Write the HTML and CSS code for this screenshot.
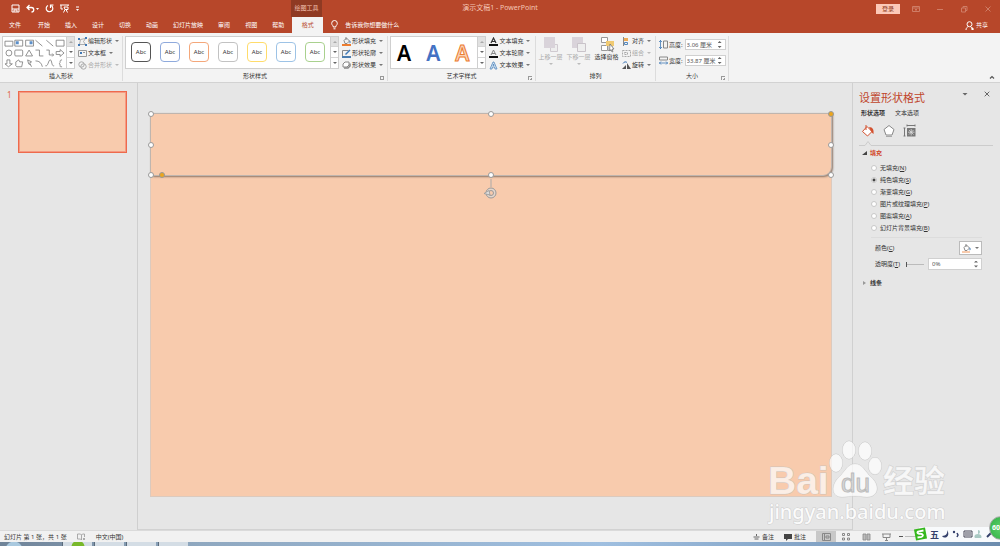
FILE: index.html
```html
<!DOCTYPE html>
<html lang="zh-CN">
<head>
  <meta charset="UTF-8">
  <title>演示文稿1 - PowerPoint</title>
  <link rel="stylesheet" href="styles.css">
</head>
<body>
<div class="app">

  <header class="titlebar">
    <div class="title-left">
      <div class="quick">
        <button aria-label="保存"><svg width="9" height="9" viewBox="0 0 9 9"><path d="M1 1h7v7H1zM1 5h7M3 8V6h3v2"/></svg></button>
        <button aria-label="撤消"><svg width="13" height="9" viewBox="0 0 13 9"><path d="M3.500 1L1 3.500 3.500 6M1 3.500h4.500a2 2 0 0 1 0 4.500" stroke-width="1.300"/><path d="M10 4h3l-1.500 2z" class="solid"/></svg></button>
        <button aria-label="重复"><svg width="9" height="9" viewBox="0 0 9 9"><path d="M3 1.500a3.300 3.300 0 1 0 3.500.3M8.500 1H5.500v3" stroke-width="1.200"/></svg></button>
        <button aria-label="放映"><svg width="9" height="9" viewBox="0 0 9 9"><path d="M0 1h9M1 1v4h2M8 1v1M4 3h4v2.500H5zM5 5.500L3.500 8.500M6 5.500l1.500 3"/></svg></button>
        <button aria-label="自定义"><svg width="5" height="7" viewBox="0 0 5 7"><path d="M1 2h3"/><path d="M1 4h3L2.500 6z" class="solid"/></svg></button>
      </div>
      <div class="context-title">绘图工具</div>
    </div>
    <div class="doc-title">演示文稿1 - PowerPoint</div>
    <div class="title-right">
      <button class="login">登录</button>
      <button aria-label="功能区选项"><svg width="8" height="8" viewBox="0 0 8 8"><path d="M.5 1.500h7v5h-7zM.5 3h7M4 6V4M3 5l1-1 1 1"/></svg></button>
      <button aria-label="最小化"><svg width="8" height="8" viewBox="0 0 8 8"><path d="M1 4.500h6"/></svg></button>
      <button aria-label="还原"><svg width="8" height="8" viewBox="0 0 8 8"><path d="M1.500 3h4v4h-4zM3 3V1.500h4V5.500H5.500"/></svg></button>
      <button aria-label="关闭"><svg width="8" height="8" viewBox="0 0 8 8"><path d="M1.500 1.500l5 5M6.500 1.500l-5 5"/></svg></button>
    </div>
  </header>

  <nav class="tabs">
    <a href="#">文件</a>
    <a href="#">开始</a>
    <a href="#">插入</a>
    <a href="#">设计</a>
    <a href="#">切换</a>
    <a href="#">动画</a>
    <a href="#">幻灯片放映</a>
    <a href="#">审阅</a>
    <a href="#">视图</a>
    <a href="#">帮助</a>
    <a href="#" class="active">格式</a>
    <a href="#" class="tell"><svg width="7" height="10" viewBox="0 0 7 10"><path d="M2.200 7V6C1.500 5.300.7 4.600.7 3.300a2.800 2.800 0 0 1 5.600 0C6.300 4.600 5.500 5.300 4.800 6v1zM2.500 8.800h2"/></svg>告诉我你想要做什么</a>
    <a href="#" class="share"><svg width="9" height="9" viewBox="0 0 9 9"><circle cx="4.500" cy="3.200" r="2.500"/><path d="M1 9c0-2 1.200-3 2.500-3.500M5.500 5.500L8 8.500M6 8h3M7.500 6.500V9"/></svg>共享</a>
  </nav>

  <section class="ribbon">
    <div class="group insert">
      <div class="group-body">
        <div class="gallery">
          <svg class="shapes" width="63" height="32" viewBox="0 0 64 32">
            <path d="M2 4h8v5H2zM12 3h8v6h-8zM23 3h8v6h-8zM33 3l7 6M44 3l7 6M54 3h8v6h-8z"/>
            <circle cx="6" cy="16" r="3"/>
            <rect x="12" y="13" width="8" height="6" rx="1"/>
            <path d="M26.500 13l3.500 6h-7zM33 13h4v6h4M44 13h3v5h4M50 16.500l1.500 1.500-1.500 1.500M54 14.500h4v-2l4 3.500-4 3.500v-2h-4z"/>
            <path d="M4 23h3v4h2.500L5.500 30 2 27h2zM13 29v-4l3-2 1 2h3l-1 5h-5zM25 23l4 2-2 1 2 4M25 23l1 4 2 1M33 24c4 0 6 2 7 6M43 29c3 1 3-6 5-6s1 7 4 6M60 23c-2 0-2 1-2 2s0 1-1 2c1 0 1 1 1 2s0 1 2 1"/>
            <path d="M13 4h3v3h-3zM27 4h3v3h-3z" fill="#5b8fc9" stroke="none"/>
          </svg>
          <div class="scroller"><button class="up" aria-label="上"></button><button aria-label="下"></button><button class="more" aria-label="更多"></button></div>
        </div>
        <div class="commands">
          <button><svg width="9" height="9" viewBox="0 0 9 9"><path d="M1.500 7.500l1-5 5-1-2 3 2 3z" stroke="#999" stroke-width=".8"/><path d="M0 1h2v2H0zM7 0h2v2H7zM7 7h2v2H7zM0 7h2v2H0z" fill="#3f78b5"/></svg>编辑形状<i></i></button>
          <button><svg width="9" height="9" viewBox="0 0 9 9"><path d="M.5 1.500h8v6h-8zM5 3.500h2" stroke="#999"/><path d="M2 3h2v2H2z" fill="#3f78b5"/></svg>文本框<i></i></button>
          <button disabled><svg width="9" height="9" viewBox="0 0 9 9"><circle cx="3.500" cy="3.500" r="2.700" stroke="#aaa"/><circle cx="5.500" cy="5.500" r="2.700" stroke="#aaa"/></svg>合并形状<i></i></button>
        </div>
      </div>
      <div class="group-label">插入形状</div>
    </div>

    <div class="group styles">
      <div class="group-body">
        <div class="gallery">
          <div class="tiles">
            <button class="tile black">Abc</button>
            <button class="tile blue">Abc</button>
            <button class="tile orange">Abc</button>
            <button class="tile gray">Abc</button>
            <button class="tile yellow">Abc</button>
            <button class="tile sky">Abc</button>
            <button class="tile green">Abc</button>
          </div>
          <div class="scroller"><button class="up" aria-label="上"></button><button aria-label="下"></button><button class="more" aria-label="更多"></button></div>
        </div>
        <div class="commands">
          <button><svg width="9" height="9" viewBox="0 0 9 9"><path d="M2 3.500L4.500 1 7.500 4 5 6.500H3zM4 0v3" stroke="#888"/><path d="M7.500 3.500c2 1 1 3 0 3z" fill="#3f78b5"/><path d="M0 7h9v2H0z" fill="#ed7d31"/></svg>形状填充<i></i></button>
          <button><svg width="9" height="9" viewBox="0 0 9 9"><path d="M.5 7V1.500h6" stroke="#888"/><path d="M8 1L3.500 5.500" stroke="#3f78b5" stroke-width="1.500"/><path d="M0 7h9v2H0z" fill="#4b7cae"/></svg>形状轮廓<i></i></button>
          <button><svg width="9" height="9" viewBox="0 0 9 9"><path d="M2 7h4l2-2V2.500" stroke="#888" stroke-width="1.500"/><path d="M1 3l2-2h4v3L5 6H1z" fill="#fff" stroke="#888"/></svg>形状效果<i></i></button>
        </div>
      </div>
      <div class="group-label">形状样式<span class="launcher"></span></div>
    </div>

    <div class="group wordart">
      <div class="group-body">
        <div class="gallery">
          <div class="letters">
            <button class="fill-black">A</button>
            <button class="fill-blue">A</button>
            <button class="fill-orange">A</button>
          </div>
          <div class="scroller"><button class="up" aria-label="上"></button><button aria-label="下"></button><button class="more" aria-label="更多"></button></div>
        </div>
        <div class="commands">
          <button><svg width="9" height="9" viewBox="0 0 9 9"><path d="M2 6l2.500-5L7 6M3 4.500h3" stroke="#333" stroke-width="1.200"/><path d="M0 7h9v2H0z" fill="#111"/></svg>文本填充<i></i></button>
          <button><svg width="9" height="9" viewBox="0 0 9 9"><path d="M2 6l2.500-5L7 6M3 4.500h3" stroke="#888"/><path d="M0 7h9v2H0z" fill="#111"/></svg>文本轮廓<i></i></button>
          <button><svg width="9" height="9" viewBox="0 0 9 9"><path d="M1 8l3-7h1l3 7H6L5.500 6h-2L3 8zM4 4.500h1L4.500 3z" fill="#d5e5f5" stroke="#5689bd" stroke-width=".8"/></svg>文本效果<i></i></button>
        </div>
      </div>
      <div class="group-label">艺术字样式<span class="launcher"></span></div>
    </div>

    <div class="group arrange">
      <div class="group-body">
        <button class="big" disabled><svg width="16" height="17" viewBox="0 0 16 17"><path d="M7.500 8.500h7v7h-7z" fill="#eee" stroke="#d0cad0"/><path d="M1 1h11v11H1z" fill="#d9d3da"/></svg>上移一层<i></i></button>
        <button class="big" disabled><svg width="16" height="17" viewBox="0 0 16 17"><path d="M1 1h11v11H1z" fill="#d9d3da"/><path d="M6.500 7.500h8v8h-8z" fill="#eee" stroke="#c9c3c9"/></svg>下移一层<i></i></button>
        <button class="big"><svg width="16" height="17" viewBox="0 0 16 17"><path d="M2.500 1.500h6v5h-6zM2.500 9.500h6v5h-6zM9 9.500h4v5H9z" fill="#fff" stroke="#999"/><path d="M7 5h8v5H7z" fill="#f0ca72"/><path d="M11 8l4 5-2 .2 1 2.300-1 .5-1-2.300-1.500 1z" fill="#fff" stroke="#666" stroke-width=".7"/></svg>选择窗格</button>
        <div class="commands">
          <button><svg width="9" height="9" viewBox="0 0 9 9"><path d="M1.500 0v9" stroke="#888"/><path d="M2 1h4v3H2z" fill="#edaa55"/><path d="M2.500 5.500h3v2h-3z" stroke="#5689bd"/></svg>对齐<i></i></button>
          <button disabled><svg width="9" height="9" viewBox="0 0 9 9"><path d="M.5 1.500h8v6h-8zM2.500 3.500h3v2h-3z" stroke="#aaa" stroke-dasharray="2 1"/></svg>组合<i></i></button>
          <button><svg width="9" height="9" viewBox="0 0 9 9"><path d="M0 8h4V4zM5 8h4L5 2z" fill="#555"/><path d="M1 2.500c1-2 3-2 4-1" stroke="#3f78b5"/></svg>旋转<i></i></button>
        </div>
      </div>
      <div class="group-label">排列</div>
    </div>

    <div class="group size">
      <div class="group-body">
        <div class="measures">
          <label for="shape-height"><svg width="9" height="9" viewBox="0 0 9 9"><path d="M4.500 1h4v7h-4z" stroke="#888"/><path d="M1.500 0v9M0 2l1.500-1.500L3 2M0 7l1.500 1.500L3 7" stroke="#3f78b5" stroke-width=".8"/></svg>高度:</label>
          <span class="spin"><input id="shape-height" type="text" value="3.06 厘米"><b></b></span>
          <label for="shape-width"><svg width="9" height="9" viewBox="0 0 9 9"><path d="M.5 1h8v3h-8z" stroke="#888"/><path d="M0 7h9M2 5.500L.5 7 2 8.500M7 5.500L8.500 7 7 8.500" stroke="#3f78b5" stroke-width=".8"/></svg>宽度:</label>
          <span class="spin"><input id="shape-width" type="text" value="33.87 厘米"><b></b></span>
        </div>
      </div>
      <div class="group-label">大小<span class="launcher"></span></div>
    </div>
    <button class="collapse" aria-label="折叠功能区"><svg width="6" height="4" viewBox="0 0 6 4"><path d="M1 3.500l2-2 2 2" stroke="#555" stroke-width="1.200"/></svg></button>
  </section>

  <main class="workspace">
    <aside class="thumbs">
      <span>1</span>
      <div class="thumb"></div>
    </aside>

    <div class="canvas">
      <div class="slide">
        <div class="shape">
          <span class="handle nw"></span>
          <span class="handle n"></span>
          <span class="handle ne adjust"></span>
          <span class="handle w"></span>
          <span class="handle e"></span>
          <span class="handle sw"></span>
          <span class="handle s"></span>
          <span class="handle se"></span>
          <span class="handle corner adjust"></span>
          <svg class="rotate" width="14" height="22" viewBox="0 0 14 22"><path d="M7 2v8" stroke="#aaa"/><circle cx="7" cy="16" r="5" fill="#e4d6cc" stroke="#999"/><circle cx="7" cy="16" r="2.500" fill="#f8cbad" stroke="#999"/><path d="M0 16.500l5-3 1 4.500z" fill="#ddd" stroke="#999" stroke-width=".8"/></svg>
        </div>
      </div>
    </div>

    <aside class="pane">
      <div class="pane-head">
        <h2>设置形状格式</h2>
        <button aria-label="选项"><svg width="6" height="6" viewBox="0 0 6 6"><path d="M.5 2h5L3 4.500z" fill="#666"/></svg></button>
        <button aria-label="关闭窗格"><svg width="6" height="6" viewBox="0 0 6 6"><path d="M.7.7l4.600 4.600M5.300.7L.7 5.300" stroke="#666"/></svg></button>
      </div>
      <div class="pane-tabs"><a href="#" class="on">形状选项</a><a href="#">文本选项</a></div>
      <div class="pane-icons">
        <button aria-label="填充与线条"><svg width="14" height="14" viewBox="0 0 14 14"><path d="M1.500 7.500L6 2.500l5 5L6.500 12z" fill="#fff" stroke="#d35230"/><path d="M5 1v5" stroke="#d35230"/><path d="M8 3c4 0 5 3 4.500 7-2-1-2.500-3-4.500-7z" fill="#d35230"/></svg></button>
        <button aria-label="效果"><svg width="14" height="14" viewBox="0 0 14 14"><path d="M7 1.500l5 4-2 5.500H4L2 5.500z" fill="#fff" stroke="#888"/><path d="M4 12.500h6" stroke="#aaa"/></svg></button>
        <button aria-label="大小与属性"><svg width="14" height="14" viewBox="0 0 14 14"><path d="M4 1.500h8M4 .5v2M12 .5v2M1.500 4v8M.5 4h2M.5 12h2" stroke="#777"/><path d="M4 4h8.500v8.500H4z" fill="#777"/><path d="M8.200 5v6.500M5 8.200h6.500M6 6l4.500 4.500M10.500 6L6 10.500" stroke="#ddd" stroke-width=".8"/></svg></button>
      </div>
      <svg class="notch" width="134" height="5" viewBox="0 0 134 5"><path d="M0 4.500h6l3-4 3 4h122" stroke="#ccc"/></svg>
      <h3 class="open">填充</h3>
      <div class="radios">
        <label><input type="radio" name="fill">无填充(<u>N</u>)</label>
        <label><input type="radio" name="fill" checked>纯色填充(<u>S</u>)</label>
        <label><input type="radio" name="fill">渐变填充(<u>G</u>)</label>
        <label><input type="radio" name="fill">图片或纹理填充(<u>P</u>)</label>
        <label><input type="radio" name="fill">图案填充(<u>A</u>)</label>
        <label><input type="radio" name="fill">幻灯片背景填充(<u>B</u>)</label>
      </div>
      <div class="field">
        <label for="fill-color">颜色(<u>C</u>)</label>
        <button id="fill-color" class="color"><svg width="9" height="9" viewBox="0 0 9 9"><path d="M2 3.500L4.500 1 7.500 4 5 6.500H3zM4 0v3" stroke="#888"/><path d="M7.500 3.500c2 1 1 3 0 3z" fill="#3f78b5"/><path d="M0 7h8v2H0z" fill="#f8cbad"/></svg><i></i></button>
      </div>
      <div class="field">
        <label for="alpha">透明度(<u>T</u>)</label>
        <input class="slider" type="range" value="0" aria-label="透明度">
        <span class="spin"><input id="alpha" type="text" value="0%"><b></b></span>
      </div>
      <h3 class="closed">线条</h3>
    </aside>
  </main>

  <footer class="status">
    <span>幻灯片 第 1 张，共 1 张</span>
    <svg width="9" height="8" viewBox="0 0 9 8"><path d="M.5 1h3l1 1v5l-1-1h-3zM4.500 2l1-1h2v3M6 5l2 2M8 5L6 7" stroke="#999" stroke-width=".8"/></svg>
    <span>中文(中国)</span>
    <div class="status-right">
      <button><svg width="7" height="8" viewBox="0 0 7 8"><path d="M.5 4h6M1.500 6h4M3.500 1v2" stroke="#666"/></svg>备注</button>
      <button><svg width="8" height="8" viewBox="0 0 8 8"><path d="M0 1h8v5H4L2 8V6H0z" fill="#444"/></svg>批注</button>
      <div class="views">
        <button class="on" aria-label="普通视图"><svg width="9" height="8" viewBox="0 0 9 8"><path d="M.5.5h8v7h-8zM2.500 1v6M4 3h3v2H4z" stroke="#888"/></svg></button>
        <button aria-label="幻灯片浏览"><svg width="9" height="8" viewBox="0 0 9 8"><path d="M.5.500h2v2h-2zM5.500.5h2v2h-2zM.5 5h2v2h-2zM5.500 5h2v2h-2z" stroke="#888"/></svg></button>
        <button aria-label="阅读视图"><svg width="9" height="8" viewBox="0 0 9 8"><path d="M1 1h3v6H1zM5 1h3v6H5z" fill="#bbb" stroke="#888" stroke-width=".8"/></svg></button>
        <button aria-label="幻灯片放映"><svg width="9" height="8" viewBox="0 0 9 8"><path d="M0 1h9M1 1v3.500h7V1M4.500 5v2.500M3 7.500h3" stroke="#888"/></svg></button>
      </div>
      <span class="zoom-out"></span>
    </div>
  </footer>
  <div class="taskbar"><span class="start"></span><span></span><span></span><span></span><span></span></div>

  <div class="ime">
    <svg width="86" height="14" viewBox="0 0 86 14">
      <path d="M1 2.500L12 .5l2 11L3 13.500z" fill="#35b81d"/>
      <path d="M10.500 3.500L5 4.500c-1.500 1 0 2.500 2 2.300 3-.3 4 2 1.500 3L4.500 10.500" stroke="#fff" stroke-width="1.800"/>
      <text x="17" y="11" class="ime-mode">五</text>
      <path d="M34 3c1 3-1 6-5 6 3 4 9 0 5-6z" fill="#34406b"/>
      <circle cx="41" cy="5" r="1.200" fill="#34406b"/><path d="M44 6l1 2-1 2" stroke="#34406b" stroke-width="1.500"/>
      <path d="M51 4h8v6h-8zM52 6h6M52 8h6" stroke="#445"/>
      <path d="M65 3a2 2 0 1 1 0 4c4 0 4 4 3 4h-6c-1-1-1-4 3-4" fill="#a9c9c3"/>
      <path d="M74 10l5-5" stroke="#34406b" stroke-width="2"/>
    </svg>
  </div>
  <div class="ball">60</div>

  <svg class="watermark" width="184" height="88" viewBox="0 0 184 88">
    <g class="mark">
      <text x="1" y="55" class="brand">Bai</text>
      <ellipse cx="69" cy="24" rx="6.500" ry="9"/>
      <ellipse cx="82" cy="11" rx="6.500" ry="9"/>
      <ellipse cx="98" cy="12" rx="6.500" ry="9"/>
      <ellipse cx="108" cy="27" rx="6.500" ry="8.500"/>
      <path d="M88 25c8 0 10 8 16 13 9 8 8 20-4 20-5 0-7-1-12-1s-8 1-13 1c-11 0-11-12-3-20 6-5 8-13 16-13z"/>
      <text x="116" y="53" class="word">经验</text>
      <text x="2" y="80" class="site">jingyan.baidu.com</text>
    </g>
    <text x="74" y="53" class="du">du</text>
  </svg>
</div>
</body>
</html>
```
FILE: styles.css
```css
* {
  box-sizing: border-box;
}
body {
  margin: 0;
  font-family: "Noto Sans", "Noto Sans CJK SC", sans-serif;
  font-size: 6px;
  line-height: 8px;
  color: #333;
  background: #e6e6e6;
}
button, input {
  font: inherit;
  color: inherit;
  margin: 0;
  padding: 0;
  border: 0;
  background: none;
}
a {
  color: inherit;
  text-decoration: none;
}
svg {
  fill: none;
  flex: none;
}
i {
  border: 2px solid transparent;
  border-top-color: #777;
  border-bottom: 0;
}
.app {
  position: relative;
  height: 100vh;
  display: flex;
  flex-direction: column;
  overflow: hidden;
}

/* title bar */
.titlebar {
  display: grid;
  grid-template-columns: 1fr auto 1fr;
  height: 17px;
  background: #b7472a;
  color: #f5c5b5;
}
.titlebar svg {
  display: block;
  stroke: #fff;
}
.titlebar .solid {
  fill: #fff;
  stroke: none;
}
.title-left {
  display: flex;
}
.quick {
  display: flex;
  align-items: center;
  gap: 6px;
  width: 291px;
  padding-left: 11px;
}
.context-title {
  width: 31px;
  background: #8f3a23;
  line-height: 16px;
  text-align: center;
}
.doc-title {
  font-size: 7px;
  line-height: 16px;
}
.title-right {
  display: flex;
  justify-content: flex-end;
  align-items: center;
  gap: 16px;
  padding-right: 8px;
}
.title-right svg {
  stroke: #cf7d66;
}
.login {
  width: 24px;
  height: 10px;
  margin-right: -4px;
  background: #fcc9b8;
  color: #8f3a23;
}

/* tabs */
.tabs {
  display: flex;
  height: 16px;
  padding-left: 2px;
  gap: 1px;
  background: #b7472a;
  color: #fff;
  line-height: 16px;
}
.tabs a {
  padding: 0 7px;
}
.tabs a:first-child {
  padding-right: 9px;
}
.tabs svg {
  stroke: #fff;
}
.tabs .active {
  width: 31px;
  padding: 0;
  text-align: center;
  background: #f3f3f3;
  color: #b7472a;
}
.tabs .tell, .tabs .share {
  display: flex;
  align-items: center;
  gap: 7px;
}
.tabs .share {
  gap: 2px;
  margin-left: auto;
  padding-right: 12px;
}

/* ribbon */
.ribbon {
  display: flex;
  height: 50px;
  padding: 3px 0 1px;
  background: #f3f3f3;
  border-bottom: 1px solid #d2d2d2;
}
.group {
  display: flex;
  flex-direction: column;
  justify-content: space-between;
  border-right: 1px solid #dcdcdc;
  padding: 0 2px;
}
.insert { width: 123px; }
.styles { width: 265px; }
.wordart { width: 148px; }
.arrange { width: 120px; }
.size { width: 73px; }
.group-body {
  display: flex;
  gap: 3px;
}
.group-label {
  position: relative;
  text-align: center;
  line-height: 9px;
}
.launcher {
  position: absolute;
  right: 1px;
  bottom: 1px;
  width: 4px;
  height: 4px;
  border: 1px solid #999;
  border-width: 1px 0 0 1px;
  background: linear-gradient(135deg, transparent 50%, #999 50%);
}
.gallery {
  display: flex;
  height: 33px;
  background: #fff;
  border: 1px solid #cfcfcf;
}
.shapes {
  stroke: #777;
  stroke-width: 0.8;
}
.scroller {
  width: 8px;
  display: grid;
  grid-template-rows: 1fr 1fr 1fr;
  margin-left: auto;
  border-left: 1px solid #cfcfcf;
}
.scroller button {
  display: grid;
  place-items: center;
  border-bottom: 1px solid #d5d5d5;
}
.scroller button::before {
  content: "";
  border: 2px solid transparent;
  border-top-color: #666;
  border-bottom: 0;
}
.scroller .up {
  background: #e1e1e1;
}
.scroller .up::before {
  border: 2px solid transparent;
  border-bottom-color: #aaa;
  border-top: 0;
}
.scroller .more {
  border: 0;
}
.scroller .more::before {
  box-shadow: 0 -2px 0 -1px #666;
}
.commands {
  display: flex;
  flex-direction: column;
  gap: 2px;
}
.commands button {
  display: flex;
  align-items: center;
  gap: 1px;
  height: 10px;
}
.commands i {
  margin-left: 2px;
}
button:disabled {
  color: #aaa;
}
button:disabled i {
  border-top-color: #bbb;
}
.tiles {
  display: flex;
  gap: 9px;
  padding: 5px 5px 0;
}
.tile {
  width: 20px;
  height: 20px;
  border: 1px solid #555;
  border-radius: 4px;
  background: #fff;
}
.blue { border-color: #8faadc; }
.orange { border-color: #f4a77a; }
.gray { border-color: #c2c2c2; }
.yellow { border-color: #ffdc6b; }
.sky { border-color: #9dc3e6; }
.green { border-color: #a9d18e; }
.letters {
  display: flex;
  gap: 15px;
  padding: 0 8px 0 6px;
}
.letters button {
  font: 600 21px/33px "Noto Sans", sans-serif;
}
.fill-black { color: #000; }
.fill-blue { color: #4472c4; }
.fill-orange {
  color: #f9d3b8;
  -webkit-text-stroke: 1px #ed7d31;
}
.big {
  display: flex;
  flex-direction: column;
  align-items: center;
  width: 25px;
  white-space: nowrap;
}
.big i {
  margin-top: 2px;
}
.measures {
  display: grid;
  grid-template-columns: auto 41px;
  align-items: center;
  gap: 5px 2px;
  padding: 3px 0 0 1px;
}
.measures label {
  display: flex;
  align-items: center;
  gap: 1px;
}
.spin {
  display: flex;
  align-items: center;
  justify-content: space-between;
  height: 11px;
  padding: 0 3px 0 1px;
  background: #fff;
  border: 1px solid #d0d0d0;
  color: #555;
}
.spin input {
  width: 100%;
  min-width: 0;
}
.spin b {
  flex: none;
  width: 4px;
  height: 7px;
  background: #666;
  clip-path: polygon(50% 0, 100% 30%, 0 30%, 50% 0, 50% 100%, 0 70%, 100% 70%, 50% 100%);
}
.collapse {
  margin-left: auto;
  align-self: flex-end;
  padding-right: 5px;
}

/* workspace */
.workspace {
  flex: 1;
  min-height: 0;
  display: grid;
  grid-template-columns: 138px 1fr 148px;
}
.thumbs {
  display: flex;
  align-items: flex-start;
  gap: 6px;
  padding: 8px 10px 0 7px;
  border-right: 1px solid #cfcfcf;
  font-size: 8px;
  color: #e0654a;
}
.thumb {
  flex: 1;
  aspect-ratio: 16 / 9;
  background: #f8cbad;
  border: 1px solid #ee6a4c;
  outline: 1px solid #f49b84;
  outline-offset: -2px;
}
.canvas {
  padding: 30px 20px 0 12px;
  border-bottom: 1px solid #d2d2d2;
}
.slide {
  aspect-ratio: 16 / 9;
  background: #f8cbad;
  border: 1px solid #dccabe;
  border-top: 0;
}
.shape {
  position: relative;
  height: 16.5%;
  margin: 0 -1px;
  background: #f8cbad;
  border: 1px solid #bfb5ae;
  border-radius: 0 0 9px 4px;
  box-shadow: 1px 1px 2px #8d7668;
}
.handle {
  position: absolute;
  width: 6px;
  height: 6px;
  margin: -3px;
  border: 1px solid #999;
  border-radius: 50%;
  background: #fff;
}
.nw { left: 0; top: 0; }
.n { left: 50%; top: 0; }
.ne { left: 100%; top: 0; }
.w { left: 0; top: 50%; }
.e { left: 100%; top: 50%; }
.sw { left: 0; top: 100%; }
.s { left: 50%; top: 100%; }
.se { left: 100%; top: 100%; }
.corner { left: 11px; top: 100%; }
.adjust {
  background: #eca51c;
}
.rotate {
  position: absolute;
  left: 50%;
  top: 100%;
  margin: 2px -7px;
}

/* format pane */
.pane {
  padding: 8px 8px 0 6px;
  border-left: 1px solid #d0d0d0;
}
.pane-head {
  display: flex;
  align-items: flex-start;
  gap: 16px;
  padding-right: 2px;
}
.pane-head h2 {
  flex: 1;
  margin: 0;
  font-size: 11px;
  line-height: 13px;
  font-weight: normal;
  color: #c0452b;
  white-space: nowrap;
}
.pane-tabs {
  display: flex;
  gap: 10px;
  padding: 5px 0 0 2px;
}
.pane-tabs .on {
  font-weight: bold;
}
.pane-icons {
  display: flex;
  gap: 7px;
  padding: 7px 0 0 2px;
}
.pane-icons svg {
  display: block;
}
.notch {
  display: block;
  margin-top: 3px;
}
.pane h3 {
  display: flex;
  align-items: center;
  gap: 3px;
  margin: 3px 0 0 3px;
  font-size: 6px;
  font-weight: bold;
}
.pane h3::before {
  content: "";
  width: 5px;
  height: 4px;
  background: #444;
  clip-path: polygon(100% 0, 100% 100%, 0 100%);
}
.pane .open {
  color: #d2472a;
}
.pane .closed {
  margin-top: 9px;
}
.pane .closed::before {
  background: #999;
  clip-path: polygon(20% 0, 80% 50%, 20% 100%);
}
.radios {
  display: flex;
  flex-direction: column;
  gap: 4px;
  margin: 7px 10px 0 12px;
  padding-bottom: 5px;
  border-bottom: 1px solid #dcdcdc;
}
.radios label {
  display: flex;
  align-items: center;
}
.radios input {
  appearance: none;
  width: 6px;
  height: 6px;
  margin-right: 3px;
  border: 1px solid #c8c8c8;
  border-radius: 50%;
  background: #fff;
}
.radios input:checked {
  background: radial-gradient(#444 1px, #fff 2px);
}
.field {
  display: flex;
  align-items: center;
  gap: 4px;
  margin: 3px 10px 0 16px;
}
.field label {
  flex: 1;
  white-space: nowrap;
}
.color {
  display: flex;
  align-items: center;
  justify-content: center;
  gap: 4px;
  width: 23px;
  height: 14px;
  background: #fff;
  border: 1px solid #bbb;
}
.slider {
  appearance: none;
  width: 18px;
  height: 6px;
  background: linear-gradient(#bbb, #bbb) center / 100% 1px no-repeat;
}
.slider::-webkit-slider-thumb {
  appearance: none;
  width: 1px;
  height: 5px;
  background: #555;
}
.field .spin {
  width: 54px;
  height: 12px;
  padding-left: 3px;
}

/* status bar */
.status {
  display: flex;
  align-items: center;
  gap: 10px;
  height: 12px;
  padding-left: 4px;
  background: #f1f1f1;
  border-top: 1px solid #dadada;
}
.status-right {
  display: flex;
  align-items: center;
  gap: 10px;
  height: 100%;
  margin-left: auto;
  padding-right: 83px;
}
.status-right button {
  display: flex;
  align-items: center;
  gap: 2px;
}
.views {
  display: flex;
  height: 100%;
}
.views button {
  justify-content: center;
  width: 20px;
}
.views .on {
  background: #c8c8c8;
}
.zoom-out {
  width: 18px;
  height: 1px;
  margin-left: -7px;
  background: linear-gradient(90deg, #555 4px, transparent 4px 6px, #bbb 6px);
}
.taskbar {
  display: flex;
  gap: 2px;
  height: 4px;
  background: linear-gradient(90deg, #6f8398, #8fa8c0 20%, #9fbfe0 60%, #6c8cae);
}
.taskbar span {
  width: 30px;
  background: #d4dde5;
  border-left: 1px solid #5b6c7c;
}
.taskbar .start {
  width: 60px;
  background: radial-gradient(circle at 14px 8px, #a9c9df 8px, transparent 9px);
  border: 0;
}
.taskbar span:nth-child(2) {
  background: radial-gradient(circle at 15px 5px, #78b82a 6px, #d4dde5 7px);
}

/* things floating over the window */
.ime {
  position: absolute;
  right: 0;
  bottom: 4px;
  width: 87px;
  height: 15px;
  background: linear-gradient(90deg, transparent 6px, #f8fafc 6px);
}
.ime-mode {
  font-size: 9px;
  font-weight: bold;
  fill: #34406b;
}
.ball {
  position: absolute;
  right: -13px;
  bottom: 6px;
  width: 24px;
  height: 24px;
  padding-left: 2px;
  border: 1px solid #aaa;
  border-radius: 50%;
  background: radial-gradient(#5fd06c, #2fb043);
  color: #fff;
  font-size: 7px;
  font-weight: bold;
  line-height: 22px;
}
.watermark {
  position: absolute;
  right: 49px;
  bottom: 19px;
}
.mark {
  fill: #fff;
  fill-opacity: 0.7;
  stroke: #bbb;
  stroke-opacity: 0.6;
  stroke-width: 1;
  paint-order: stroke;
}
.brand {
  font: bold 39px "Liberation Sans", sans-serif;
}
.word {
  font: bold 31px "Noto Sans CJK SC", sans-serif;
}
.site {
  font: 500 20px "Noto Sans", sans-serif;
  fill-opacity: 0.9;
}
.du {
  font: 26px "Liberation Sans", sans-serif;
  fill: #d8d8d8;
  stroke: #bbb;
  stroke-width: 1;
}
```
